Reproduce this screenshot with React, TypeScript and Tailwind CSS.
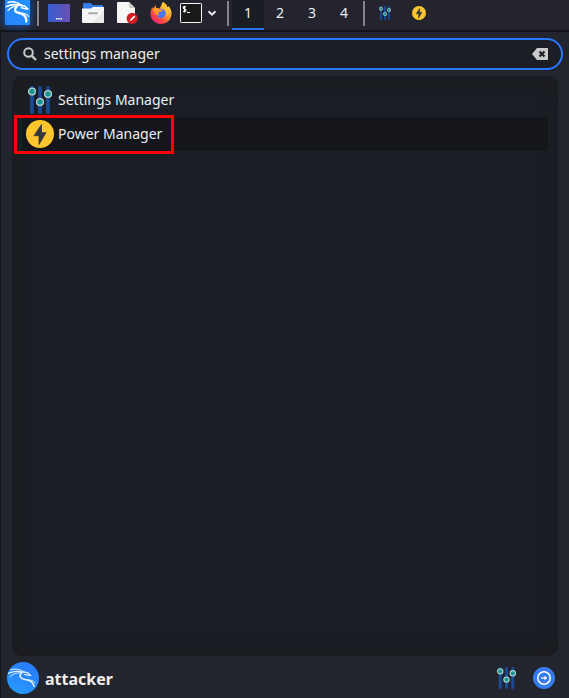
import { useState } from "react";

function KaliSquare() {
  return (
    <svg viewBox="0 0 25 25" className="size-[25px]" aria-hidden="true">
      <defs>
        <linearGradient id="kaliSquare" x1="0" y1="1" x2="1" y2="0">
          <stop offset="0" stopColor="#2583fb" />
          <stop offset="1" stopColor="#2494ff" />
        </linearGradient>
      </defs>
      <rect width="25" height="25" rx="1" fill="url(#kaliSquare)" />
      <g fill="none" stroke="#fff" strokeLinecap="round" strokeLinejoin="round">
        <path d="M3 2.500C7.500 1.200 12.500 2.300 16 5.200" strokeWidth="1.500" />
        <path d="M1.500 6.500C6 4.200 12 4.300 16.500 5.700" strokeWidth="1.800" />
        <path d="M3 10.500C5.500 7.600 8.500 6.400 12 6.200" strokeWidth="1.200" />
        <path d="M16 5.200l3.500.8 3.500 3-3.500-.4-3-.8" strokeWidth="1.600" />
        <path d="M12 6.400C8.800 9.300 9.500 12.400 14 13c4.700.6 7.300 3 7.300 8.500" strokeWidth="2.300" />
        <path d="M17 13.200c3 .1 5.300 1 6.500 3.200" strokeWidth="1.100" />
      </g>
    </svg>
  );
}

function KaliAvatar() {
  return (
    <svg viewBox="0 0 32 32" className="size-8 shrink-0" role="img" aria-label="User picture">
      <defs>
        <linearGradient id="kaliAvatar" x1="0.2" y1="1" x2="0.7" y2="0">
          <stop offset="0" stopColor="#269cff" />
          <stop offset="1" stopColor="#2879fb" />
        </linearGradient>
      </defs>
      <circle cx="16" cy="16" r="16" fill="url(#kaliAvatar)" />
      <g fill="none" stroke="#e6f0ff" strokeLinecap="round" strokeLinejoin="round">
        <path d="M3.500 7.800C8.500 6.500 13.500 7.200 17 9.800" strokeWidth="1" />
        <path d="M1.500 11.300C6.500 9 12.500 9 17 10.500" strokeWidth="1.300" />
        <path d="M3 14.800C6 12 9.500 10.700 14 10.600" strokeWidth="0.900" />
        <path d="M17 9.800l3.500 1 3.200 2.700-3.200-.4-3-.6" strokeWidth="1.200" />
        <path d="M14.500 10.800c-2.700 3.200-1.200 6 3.500 6.700 5.200.8 8.200 2.500 9 6.700" strokeWidth="1.700" />
        <path d="M20 17.600c4 .2 6.500 1.200 8 3" strokeWidth="0.900" />
      </g>
    </svg>
  );
}

function DesktopIcon() {
  return (
    <svg viewBox="0 0 22 18" className="h-[18px] w-[22px]" aria-hidden="true">
      <defs>
        <linearGradient id="desktop">
          <stop offset="0" stopColor="#355ed1" />
          <stop offset="1" stopColor="#6c50b3" />
        </linearGradient>
      </defs>
      <rect width="22" height="18" rx="1" fill="url(#desktop)" />
      <path d="M8 14.700h1.500M10.300 14.700h1.500M12.600 14.700h1.500" stroke="#fff" strokeWidth="1.400" />
    </svg>
  );
}

function FolderIcon() {
  return (
    <svg viewBox="0 0 22 20" className="h-5 w-[22px]" aria-hidden="true">
      <path d="M1 1q0-1 1-1h6.500l2.200 2H20q1 0 1 1v5H1z" fill="#347de7" />
      <path d="M0 5.500h9l2-1.500h11v15q0 1-1 1H1q-1 0-1-1z" fill="#f5f5f5" />
      <path d="M10 20L22 8v11q0 1-1 1z" fill="#e9e9e9" />
      <path d="M7 10.200h8" stroke="#aaa" strokeWidth="2" strokeLinecap="round" />
    </svg>
  );
}

function DocumentIcon() {
  return (
    <svg viewBox="0 0 21 22" className="h-[22px] w-[21px]" aria-hidden="true">
      <path d="M1 0h11l6 6v14q0 1-1 1H1q-1 0-1-1V1q0-1 1-1z" fill="#f7f7f7" />
      <path d="M12 0v5q0 1 1 1h5z" fill="#c9c9c9" />
      <circle cx="15.200" cy="16.400" r="5.600" fill="#d41b24" />
      <path d="M13 18.900l.4-1.600 3.800-3.800 1.200 1.200-3.800 3.800z" fill="#fff" />
    </svg>
  );
}

function FirefoxIcon() {
  return (
    <svg viewBox="0 0 22 22" className="size-[22px]" aria-hidden="true">
      <defs>
        <linearGradient id="fox" x1="0.85" y1="0.1" x2="0.15" y2="0.9">
          <stop offset="0" stopColor="#ffe04b" />
          <stop offset="0.4" stopColor="#ff9a2d" />
          <stop offset="0.7" stopColor="#ff4c43" />
          <stop offset="1" stopColor="#ed246c" />
        </linearGradient>
      </defs>
      <path d="M13 0c3 1.500 4.200 3.700 4.400 5.200l1.300-1c2.200 3 3 5 2.800 8C21 18 16.700 22 11 22S.5 17.500.5 12c0-3.300 1-5.500 2-7l.5 2 2.700-4 .5 3.200 3.500.4C10.500 4.500 11.500 3 13 0z" fill="url(#fox)" />
      <circle cx="11" cy="11.500" r="4.700" fill="#4779f3" />
      <path d="M3 7c2.500-1.500 5-1.200 7 .4l3 .5c-.5 1.500-2.500 1.500-3.800 2-1.600.6-1.200 2.500.8 3-2.200 1-4.500.2-5.200-1.800C3.900 10.200 3.200 9 3 7z" fill="#ff9827" />
      <path d="M13.500 6.500c3 1.500 3.500 5 2.200 7.500 2.300-1.200 3.500-4.200 1.700-8.500C16 3.500 14 2.500 13 0c-2 3-1.500 5 .5 6.500z" fill="#ffc234" />
    </svg>
  );
}

function TerminalIcon() {
  return (
    <svg viewBox="0 0 22 20" className="h-5 w-[22px]" aria-hidden="true">
      <rect x=".5" y=".5" width="21" height="19" rx=".7" fill="#191919" stroke="#f4f4f4" />
      <path d="M6 4C4.800 3.200 3.200 3.500 3.200 4.800c0 1.600 2.800.8 2.800 2.400C6 8.600 4.200 8.800 3.100 8M4.600 3v6.500M7 9.500h3" stroke="#fff" strokeWidth="1.100" fill="none" />
    </svg>
  );
}

function ChevronIcon() {
  return (
    <svg viewBox="0 0 10 6" className="h-[6px] w-[10px]" aria-hidden="true">
      <path d="M1.500 1.200L5 4.600l3.500-3.400" stroke="#eee" strokeWidth="1.900" fill="none" />
    </svg>
  );
}

function SlidersIcon({ className }: { className: string }) {
  return (
    <svg viewBox="0 0 24 28" className={className} aria-hidden="true">
      <path d="M4 2v24M12 2v24M20 2v24" stroke="#1b4a94" strokeWidth="3.800" strokeLinecap="round" />
      <g fill="#159490" stroke="#b8d6d5" strokeWidth="1.300">
        <circle cx="4" cy="5.500" r="3.400" />
        <circle cx="12" cy="16" r="3.400" />
        <circle cx="20" cy="8" r="3.400" />
      </g>
    </svg>
  );
}

function PowerIcon({ className }: { className: string }) {
  return (
    <svg viewBox="0 0 28 28" className={className} aria-hidden="true">
      <circle cx="14" cy="14" r="14" fill="#ffc62d" />
      <path d="M15.500 4.500L8 15.700h5V24.500L20 12.700h-4.500z" fill="#333640" stroke="#333640" strokeWidth=".8" strokeLinejoin="round" />
    </svg>
  );
}

function Divider() {
  return <span className="mt-px h-[25px] w-[2px] shrink-0 bg-[#858587]" />;
}

const launchers = [
  { label: "Show desktop", icon: <DesktopIcon /> },
  { label: "File manager", icon: <FolderIcon /> },
  { label: "Text editor", icon: <DocumentIcon /> },
  { label: "Firefox", icon: <FirefoxIcon /> },
];

const apps = [
  { name: "Settings Manager", icon: <SlidersIcon className="h-7 w-6" />, marked: false },
  { name: "Power Manager", icon: <PowerIcon className="size-7" />, marked: true },
];

function TopPanel() {
  const [workspace, setWorkspace] = useState(1);
  return (
    <header className="flex h-8 shrink-0 border-b-2 border-[#111216] bg-[#23242d]">
      <button aria-label="Applications" className="flex w-[37px] shrink-0 items-start pl-[5px]">
        <span className="rounded-sm shadow-[0_0_7px_2px_#174d9b]">
          <KaliSquare />
        </span>
      </button>
      <Divider />
      <nav aria-label="Launchers" className="ml-[3px] flex h-[26px] shrink-0 items-center">
        {launchers.map((item) => (
          <button key={item.label} aria-label={item.label} className="flex h-[26px] w-[34px] items-center justify-center">
            {item.icon}
          </button>
        ))}
        <button aria-label="Terminal" className="flex h-[26px] w-[26px] items-center justify-center">
          <TerminalIcon />
        </button>
        <button aria-label="More terminals" className="flex h-[26px] w-[23px] items-center pl-[3px]">
          <ChevronIcon />
        </button>
      </nav>
      <Divider />
      <nav aria-label="Workspaces" className="ml-[3px] flex w-[131px] shrink-0">
        {[1, 2, 3, 4].map((n) => (
          <button
            key={n}
            onClick={() => setWorkspace(n)}
            className={`h-[30px] w-8 border-b-2 pb-[2px] text-sm ${workspace === n ? "border-[#2672ed] bg-[#1b1d24]" : "border-transparent"}`}
          >
            {n}
          </button>
        ))}
      </nav>
      <Divider />
      <div className="ml-[3px] flex h-[26px] items-center">
        <button aria-label="Settings Manager window" className="flex w-[34px] justify-center">
          <SlidersIcon className="h-[14px] w-3" />
        </button>
        <button aria-label="Power Manager window" className="flex w-[34px] justify-center">
          <PowerIcon className="size-[14px]" />
        </button>
      </div>
    </header>
  );
}

export default function App() {
  const [query, setQuery] = useState("settings manager");
  return (
    <div className="flex min-h-screen flex-col bg-[#23252e] font-['Noto_Sans',sans-serif] text-[#eeeeee]">
      <TopPanel />
      <main className="flex flex-1 flex-col border-l border-[#15161b] pt-[6px]">
        <div className="mx-[6px] flex h-8 items-center rounded-full border-2 border-[#2777ff] bg-[#1b1e25] pr-[13px] pl-[14px]">
          <svg viewBox="0 0 14 14" className="size-[14px] shrink-0" aria-hidden="true">
            <circle cx="5.500" cy="5.500" r="4.300" fill="none" stroke="#c9c9c9" strokeWidth="2" />
            <path d="M8.800 8.800L13 13" stroke="#c9c9c9" strokeWidth="2.400" />
          </svg>
          <input
            aria-label="Search applications"
            value={query}
            onChange={(e) => setQuery(e.target.value)}
            className="ml-[7px] h-7 min-w-0 flex-1 bg-transparent pb-[2px] text-sm outline-none"
          />
          <button aria-label="Clear search" onClick={() => setQuery("")}>
            <svg viewBox="0 0 16 12" className="h-3 w-4" aria-hidden="true">
              <path d="M0 6l5-6h11v12H5z" fill="#cacaca" />
              <path d="M7.500 3.500l5 5M12.500 3.500l-5 5" stroke="#1b1e25" strokeWidth="2.200" />
            </svg>
          </button>
        </div>
        <ul className="mx-[11px] mt-[6px] flex-1 rounded-[10px] bg-[#1b1e25] px-[10px] pt-[7px] shadow-[inset_0_0_20px_#1b1b1d]">
          {apps.map((app) => (
            <li key={app.name} className={`relative rounded-[4px] ${app.marked ? "bg-[#15161b]" : ""}`}>
              <button className="flex h-[34px] w-full items-center gap-1 pl-1 text-left text-sm">
                <span className="flex w-7 justify-center">{app.icon}</span>
                {app.name}
              </button>
              {app.marked && (
                <span className="pointer-events-none absolute -top-[2px] -left-2 h-[39px] w-40 border-3 border-[#ff0000]" />
              )}
            </li>
          ))}
        </ul>
        <footer className="flex h-[42px] shrink-0 items-center pt-[2px] pr-[14px] pl-[6px]">
          <KaliAvatar />
          <span className="ml-[6px] pt-[2px] text-base font-bold">attacker</span>
          <button aria-label="All settings" className="ml-auto flex w-[38px] justify-center">
            <SlidersIcon className="h-[22px] w-[19px]" />
          </button>
          <button aria-label="Log out" className="ml-2">
            <svg viewBox="0 0 22 22" className="size-[22px]" aria-hidden="true">
              <circle cx="11" cy="11" r="11" fill="#367bf0" />
              <circle cx="11" cy="11" r="6.200" fill="none" stroke="#fff" strokeWidth="1.500" />
              <path d="M8 11h4" stroke="#fff" strokeWidth="1.300" />
              <path d="M11.500 8.800l2.700 2.200-2.700 2.200z" fill="#fff" />
            </svg>
          </button>
        </footer>
      </main>
    </div>
  );
}
